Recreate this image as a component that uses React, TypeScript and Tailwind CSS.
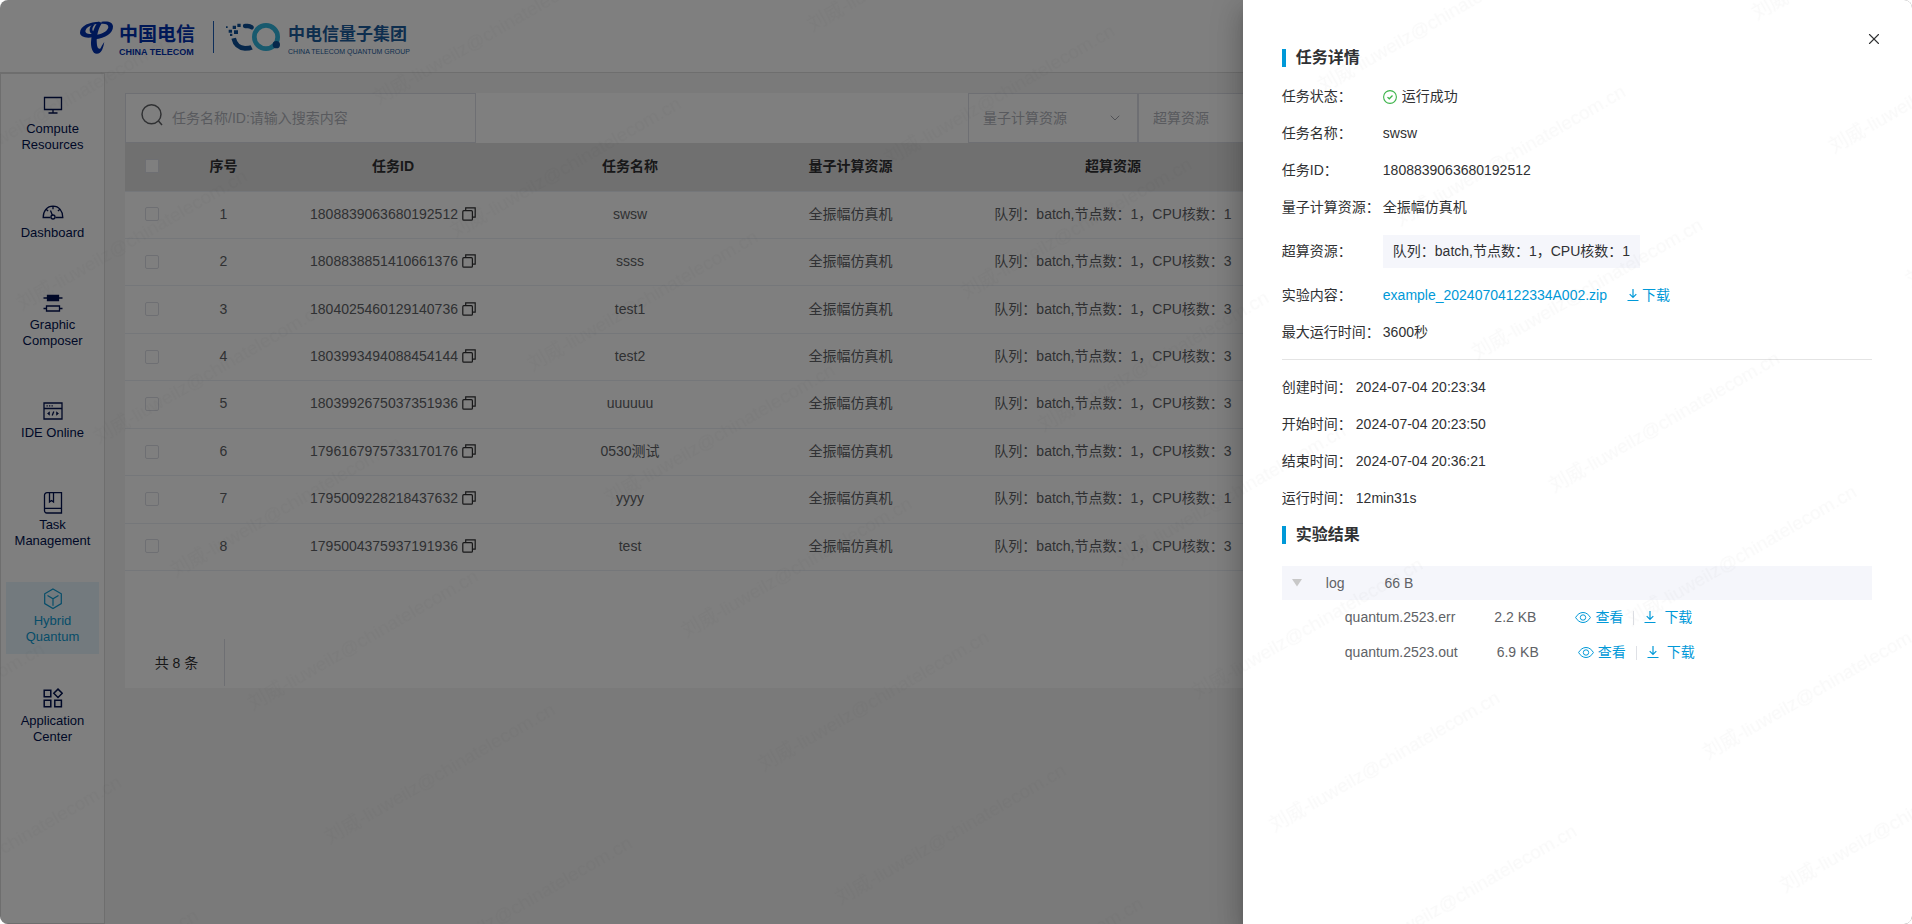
import type { ReactNode } from "react";
import { ChevronDown, X } from "lucide-react";

const navItems = [
  { label: ["Compute", "Resources"], icon: "monitor", space: "" },
  { label: ["Dashboard"], icon: "gauge", space: "mt-8" },
  { label: ["Graphic", "Composer"], icon: "composer", space: "mt-9" },
  { label: ["IDE Online"], icon: "ide", space: "mt-9" },
  { label: ["Task", "Management"], icon: "book", space: "mt-9" },
  { label: ["Hybrid", "Quantum"], icon: "cube", space: "mt-6", active: true },
  { label: ["Application", "Center"], icon: "apps", space: "mt-7" },
];

const tasks = [
  { id: "1808839063680192512", name: "swsw", cpu: 1 },
  { id: "1808838851410661376", name: "ssss", cpu: 3 },
  { id: "1804025460129140736", name: "test1", cpu: 3 },
  { id: "1803993494088454144", name: "test2", cpu: 3 },
  { id: "1803992675037351936", name: "uuuuuu", cpu: 3 },
  { id: "1796167975733170176", name: "0530测试", cpu: 3 },
  { id: "1795009228218437632", name: "yyyy", cpu: 1 },
  { id: "1795004375937191936", name: "test", cpu: 3 },
];

const times = [
  { label: "创建时间：", value: "2024-07-04 20:23:34" },
  { label: "开始时间：", value: "2024-07-04 20:23:50" },
  { label: "结束时间：", value: "2024-07-04 20:36:21" },
  { label: "运行时间：", value: "12min31s" },
];

const files = [
  { name: "quantum.2523.err", size: "2.2 KB" },
  { name: "quantum.2523.out", size: "6.9 KB" },
];

const navIcons: Record<string, ReactNode> = {
  monitor: (
    <svg width="20" height="20" viewBox="0 0 20 20" fill="none" stroke="currentColor" strokeWidth="1.3">
      <path d="M1.5 1.500h17v12h-17zM10 13.500v3.500M5.500 17h9" />
    </svg>
  ),
  gauge: (
    <svg width="22" height="20" viewBox="0 -4 22 20" fill="none" stroke="currentColor" strokeWidth="1.3">
      <path d="M8.500 13.500H1.200C1.200 7 5 2.200 11 2.200S20.800 7 20.800 13.500H13.500M11 2.200v3M4.300 5.500l1.800 1.600M17.700 5.500l-1.800 1.600M8.500 6.500l2 5" />
      <circle cx="11" cy="13" r="2" />
    </svg>
  ),
  composer: (
    <svg width="20" height="20" viewBox="0 0 20 20" fill="none" stroke="currentColor" strokeWidth="1.3">
      <path d="M.5 6h19M.5 16.500h3M16.500 16.500h3" />
      <path d="M4.500 3.500h11v5h-11z" fill="currentColor" />
      <path d="M3.500 14h13v5h-13z" />
    </svg>
  ),
  ide: (
    <svg width="20" height="20" viewBox="0 0 20 20" fill="none" stroke="currentColor" strokeWidth="1.3">
      <path d="M1 3h18v16H1zM1 8.500h18" />
      <path d="M3.500 5.800h1.300M6 5.800h1.300M8.500 5.800h1.300" />
      <path d="M10.800 11.500l-1.600 4" />
      <path d="M6.500 11.800L4.500 13.500l2 1.700zM13.500 11.800l2 1.700-2 1.700z" fill="currentColor" strokeWidth=".6" />
    </svg>
  ),
  book: (
    <svg width="20" height="22" viewBox="0 0 20 22" fill="none" stroke="currentColor" strokeWidth="1.3">
      <path d="M18.500.700H4A2.500 2.500 0 0 0 1.500 3.200v15.600a2.200 2.200 0 0 0 2.200 2.200h14.800zM1.800 16.300h16.500M6.500 1v9l2-1.500 2 1.500V1" />
    </svg>
  ),
  cube: (
    <svg width="20" height="22" viewBox="0 0 20 22" fill="none" stroke="currentColor" strokeWidth="1.2">
      <path d="M10 .9l8.300 4.900v9.800L10 20.500l-8.300-4.900V5.800zM4.500 7.500l5.500 3.200 5.500-3.200M10 10.700v7" />
    </svg>
  ),
  apps: (
    <svg width="20" height="20" viewBox="0 0 20 20" fill="none" stroke="currentColor" strokeWidth="1.5">
      <path d="M1.200 2.200h6.600v6.600H1.200zM1.200 12.200h6.600v6.600H1.200zM11.800 12.200h6.600v6.600h-6.600zM15 1.100l4.200 4.200L15 9.500l-4.200-4.200z" />
    </svg>
  ),
};

const TelecomMark = () => (
  <svg width="33" height="33" viewBox="0 0 98 97" fill="#0030ae" aria-hidden="true">
    <path d="M58 2C30 2 0 14 0 34c0 13 16 17 38 14V38C22 40 13 34 17 26 22 16 38 9 58 8z" />
    <path d="M36 10C24 22 26 40 46 42v-9C34 32 34 20 44 9z" />
    <path d="M64 2c20-4 34 2 34 14 0 20-22 34-54 38l-2-12c22-2 40-12 42-23C85 10 76 7 64 8z" />
    <path d="M54 2l12 3C55 20 48 45 50 66c1 12 4 16 10 16 4-6 6-12 12-20-2 16-8 35-22 35-13 0-19-21-17-39C35 36 44 14 54 2z" />
  </svg>
);

const QuantumMark = () => (
  <svg width="56" height="28" viewBox="0 0 168 84" fill="none" aria-hidden="true">
    <path d="M23 46c4 18 16 29 34 30 8 0 14 0 20-3" stroke="#0c4f96" strokeWidth="14" />
    <path d="M57 9h8c4 0 8 1 12 4" stroke="#0c4f96" strokeWidth="13" strokeLinecap="round" />
    <circle cx="120" cy="42" r="35" stroke="#30b4dc" strokeWidth="14" />
    <circle cx="151" cy="65" r="11" fill="#0c4f96" />
    <g fill="#0c4f96">
      <path d="M34 2h10v10H34zM20 8h10v10H20zM8 20h10v9H8zM24 22h12v11H24zM0 10h5v5H0zM12 32h7v7h-7z" />
    </g>
  </svg>
);

const CopyIcon = () => (
  <svg width="14" height="14" viewBox="0 0 14 14" fill="none" stroke="#303133" strokeWidth="1.2">
    <path d="M3.700 3.500V.8h9.500v9.400h-2.700" />
    <rect x=".8" y="3.700" width="9.600" height="9.500" rx="1" />
  </svg>
);

const DownloadIcon = () => (
  <svg width="12" height="14" viewBox="0 0 12 14" fill="none" stroke="currentColor" strokeWidth="1.2">
    <path d="M6 0v8.500M2.700 5.200L6 8.500l3.300-3.300M.5 11.500h11" />
  </svg>
);

const EyeIcon = () => (
  <svg width="16" height="14" viewBox="0 0 16 14" fill="none" stroke="currentColor">
    <path d="M.6 6.500C2.500 3.300 5 1.500 8 1.500s5.500 1.800 7.400 5C13.500 9.700 11 11.500 8 11.500S2.500 9.700.6 6.500z" />
    <circle cx="8" cy="6.500" r="2.700" />
  </svg>
);

const Header = () => (
  <header className="flex h-[73px] shrink-0 items-center border-b border-[#dcdcdc] bg-white pt-0.5 pl-20">
    <TelecomMark />
    <div className="ml-1.5 flex flex-col pt-1.5 text-[#0030ae]">
      <span className="text-[19px] leading-6 font-bold">中国电信</span>
      <span className="text-[9px] leading-[10px] font-bold">CHINA TELECOM</span>
    </div>
    <div className="mr-3 ml-[18px] h-8 w-px bg-[#1d5cb4]" />
    <QuantumMark />
    <div className="ml-1.5 flex flex-col pt-1.5 text-[#1c5c9c]">
      <span className="text-[17px] leading-6 font-bold">中电信量子集团</span>
      <span className="text-[7px] leading-[10px]">CHINA TELECOM QUANTUM GROUP</span>
    </div>
  </header>
);

const Sidebar = () => (
  <nav className="w-[105px] shrink-0 border border-[#dcdcdc] bg-white px-[5px] pt-4">
    {navItems.map((item) => (
      <a
        key={item.icon}
        href="#"
        className={`flex flex-col items-center pt-1.5 pb-[9px] text-center text-[13px] leading-4 ${item.space} ${
          item.active ? "bg-[#e6f5fc] text-[#0d9ad3]" : "text-[#00114f]"
        }`}
      >
        <span className="h-[25px]">{navIcons[item.icon]}</span>
        {item.label.map((line) => (
          <span key={line}>{line}</span>
        ))}
      </a>
    ))}
  </nav>
);

const FilterSelect = ({ label }: { label: string }) => (
  <div className="relative w-[170px]">
    <select
      aria-label={label}
      className="h-full w-full appearance-none border border-[#dcdfe6] bg-white px-3.5 text-sm text-[#b2b5bc]"
    >
      <option>{label}</option>
    </select>
    <ChevronDown size={16} strokeWidth={1.5} className="pointer-events-none absolute top-[17px] right-[15px] text-[#a2a5ac]" />
  </div>
);

const TaskTable = () => (
  <table className="h-[428px] w-full table-fixed border-collapse text-center text-sm text-[#606266]">
    <colgroup>
      <col className="w-[54px]" />
      <col className="w-[89px]" />
      <col className="w-[250px]" />
      <col className="w-[224px]" />
      <col className="w-[217px]" />
      <col className="w-[308px]" />
      <col />
    </colgroup>
    <thead>
      <tr className="h-12 border-b border-[#ebeef5] bg-[#e0e0e0] text-[#303133] *:pb-0.5">
        <th className="leading-none">
          <input type="checkbox" aria-label="全选" className="size-3.5 appearance-none border border-[#dcdfe6] bg-white align-middle" />
        </th>
        <th>序号</th>
        <th>任务ID</th>
        <th>任务名称</th>
        <th>量子计算资源</th>
        <th>超算资源</th>
        <th />
      </tr>
    </thead>
    <tbody>
      {tasks.map((task, index) => (
        <tr key={task.id} className="border-b border-[#ebeef5] *:pb-0.5">
          <td className="leading-none">
            <input
              type="checkbox"
              aria-label={task.name}
              className="size-3.5 appearance-none rounded-xs border border-[#dcdfe6] bg-white align-middle"
            />
          </td>
          <td>{index + 1}</td>
          <td>
            <div className="flex items-center justify-center gap-1">
              {task.id}
              <button type="button" aria-label="复制">
                <CopyIcon />
              </button>
            </div>
          </td>
          <td>{task.name}</td>
          <td>全振幅仿真机</td>
          <td>队列：batch,节点数：1，CPU核数：{task.cpu}</td>
          <td />
        </tr>
      ))}
    </tbody>
  </table>
);

const Field = ({ label, children }: { label: string; children: ReactNode }) => (
  <div className="flex items-center">
    <dt className="w-[101px] shrink-0">{label}</dt>
    <dd className="flex items-center">{children}</dd>
  </div>
);

const SectionTitle = ({ children }: { children: ReactNode }) => (
  <h2 className="flex h-[18px] items-center gap-2.5 text-base leading-5 font-bold">
    <span className="h-full w-1 bg-[#0099d8]" />
    {children}
  </h2>
);

const TaskDrawer = () => (
  <aside className="absolute inset-y-0 right-0 w-[35%] bg-white pt-[49px] pr-10 pl-[39px] text-sm leading-[19px] text-[#303133] shadow-[0_8px_10px_-5px_rgba(0,0,0,0.2),0_16px_24px_2px_rgba(0,0,0,0.14),0_6px_30px_5px_rgba(0,0,0,0.12)]">
    <button type="button" aria-label="关闭" className="absolute top-[30px] right-[29px] text-[#303133]">
      <X size={18} strokeWidth={1.5} />
    </button>

    <SectionTitle>任务详情</SectionTitle>
    <dl className="mt-5 flex flex-col gap-[18px] border-b border-[#e4e4e4] pb-[17px]">
      <Field label="任务状态：">
        <svg width="14" height="14" viewBox="0 0 14 14" fill="none" stroke="#3cb44a" className="mr-[5px]">
          <circle cx="7" cy="7" r="6.400" strokeWidth="1.100" />
          <path d="M4.500 7.100l1.800 1.700 3.200-3.300" strokeWidth="1.300" />
        </svg>
        运行成功
      </Field>
      <Field label="任务名称：">swsw</Field>
      <Field label="任务ID：">1808839063680192512</Field>
      <Field label="量子计算资源：">全振幅仿真机</Field>
      <Field label="超算资源：">
        <span className="bg-[#f5f6fb] px-2.5 py-[7px]">队列：batch,节点数：1，CPU核数：1</span>
      </Field>
      <Field label="实验内容：">
        <a href="#" className="text-[#0099d8]">example_20240704122334A002.zip</a>
        <a href="#" className="ml-5 flex items-center gap-[3px] text-[#0099d8]">
          <DownloadIcon />
          下载
        </a>
      </Field>
      <Field label="最大运行时间：">3600秒</Field>
    </dl>

    <dl className="my-[18px] flex flex-col gap-[18px]">
      {times.map((item) => (
        <div key={item.label} className="flex items-center">
          <dt className="w-[74px]">{item.label}</dt>
          <dd>{item.value}</dd>
        </div>
      ))}
    </dl>

    <SectionTitle>实验结果</SectionTitle>
    <div className="mt-[22px] text-[#606266]">
      <div className="flex h-[34px] items-center bg-[#f5f6fb] pl-2.5">
        <svg width="10" height="8" viewBox="0 0 10 8" fill="#c8c8c8">
          <path d="M0 0h10L5 7.500z" />
        </svg>
        <span className="ml-6">log</span>
        <span className="ml-10">66 B</span>
      </div>
      {files.map((file) => (
        <div key={file.name} className="flex h-[35px] items-center gap-[39px] pl-[63px]">
          <span>{file.name}</span>
          <span>{file.size}</span>
          <div className="flex items-center text-[#0099d8]">
            <a href="#" className="flex items-center gap-1">
              <EyeIcon />
              查看
            </a>
            <span className="mx-2.5 h-3.5 w-px bg-[#dfe1e6]" />
            <a href="#" className="flex items-center gap-2">
              <DownloadIcon />
              下载
            </a>
          </div>
        </div>
      ))}
    </div>
  </aside>
);

const Watermark = () => (
  <svg className="pointer-events-none absolute inset-0 size-full" aria-hidden="true">
    <defs>
      <pattern id="watermark" width="412" height="154" patternUnits="userSpaceOnUse" patternTransform="translate(1323 93) rotate(-30) translate(0 -30)">
        <text x="0" y="30" fontSize="19" fill="#000" fillOpacity="0.025">
          刘威-liuweilz@chinatelecom.cn
        </text>
      </pattern>
    </defs>
    <rect width="100%" height="100%" fill="url(#watermark)" />
  </svg>
);

const App = () => {
  return (
    <div className="relative flex min-h-screen flex-col overflow-hidden rounded-lg font-['Liberation_Sans','Noto_Sans_CJK_SC',sans-serif]">
      <Header />
      <div className="flex grow">
        <Sidebar />
        <main className="min-w-0 grow bg-[#f4f4f4] p-5">
          <section className="bg-white">
            <div className="flex h-[50px] justify-between">
              <div className="relative w-[351px]">
                <svg width="22" height="22" viewBox="0 0 22 22" fill="none" stroke="#606266" strokeWidth="1.5" className="pointer-events-none absolute top-[11px] left-4">
                  <circle cx="10.500" cy="10.300" r="9.500" />
                  <path d="M17.500 17l3.500 4" />
                </svg>
                <input
                  type="text"
                  aria-label="搜索"
                  placeholder="任务名称/ID:请输入搜索内容"
                  className="h-full w-full border border-[#dcdfe6] pl-[46px] text-sm placeholder:text-[#b2b5bc]"
                />
              </div>
              <div className="flex w-[924px] shrink-0">
                <FilterSelect label="量子计算资源" />
                <FilterSelect label="超算资源" />
              </div>
            </div>
            <TaskTable />
            <div className="flex h-[117px] items-end pb-0.5">
              <div className="flex h-[47px] w-[100px] items-center justify-center border-r border-[#dcdfe6] pl-1 text-sm text-[#303133]">
                共 8 条
              </div>
            </div>
          </section>
        </main>
      </div>

      <div className="absolute inset-0 bg-black/50" />
      <TaskDrawer />
      <Watermark />
    </div>
  );
};

export default App;
